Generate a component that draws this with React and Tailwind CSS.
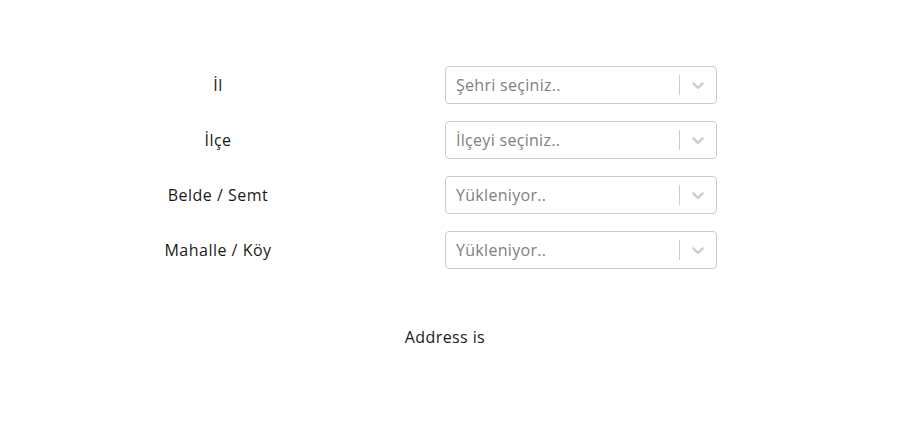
import React from "react";

const rows = [
    { label: "İl", placeholder: "Şehri seçiniz.." },
    { label: "İlçe", placeholder: "İlçeyi seçiniz.." },
    { label: "Belde / Semt", placeholder: "Yükleniyor.." },
    { label: "Mahalle / Köy", placeholder: "Yükleniyor.." },
];

const Chevron = () => (
    <svg viewBox="0 0 20 20" className="w-5 h-5 fill-[#cccccc]">
        <path d="M4.516 7.548c0.436-0.446 1.043-0.481 1.576 0l3.908 3.747 3.908-3.747c0.533-0.481 1.141-0.446 1.574 0 0.436 0.445 0.408 1.197 0 1.615-0.406 0.418-4.695 4.502-4.695 4.502-0.217 0.223-0.502 0.335-0.787 0.335s-0.57-0.112-0.789-0.335c0 0-4.287-4.084-4.695-4.502s-0.436-1.17 0-1.615z" />
    </svg>
);

const Select = ({ placeholder }) => (
    <div className="w-[272px] h-[38px] flex items-center border border-[#cccccc] rounded-[4px] bg-white">
        <div className="flex-1 px-[10px] text-[16px] tracking-[0.3px] text-[#808080] truncate">{placeholder}</div>
        <div className="w-px self-stretch my-[8px] bg-[#cccccc]" />
        <div className="px-[8px] flex items-center">
            <Chevron />
        </div>
    </div>
);

const App = () => {
    return (
        <div
            className="w-full min-h-[430px] bg-white text-[#1a1a1a]"
            style={{ fontFamily: '"Open Sans", "Liberation Sans", sans-serif' }}
        >
            <div className="pt-[66px] flex flex-col gap-[17px]">
                {rows.map((r) => (
                    <div key={r.label} className="flex items-center">
                        <div className="w-[436px] text-center text-[16px] tracking-[0.5px]">{r.label}</div>
                        <div className="ml-[9px]">
                            <Select placeholder={r.placeholder} />
                        </div>
                    </div>
                ))}
            </div>
            <div className="pt-[56px] w-[890px] text-center text-[16px] tracking-[0.4px]">Address is</div>
        </div>
    );
};

export default App;
